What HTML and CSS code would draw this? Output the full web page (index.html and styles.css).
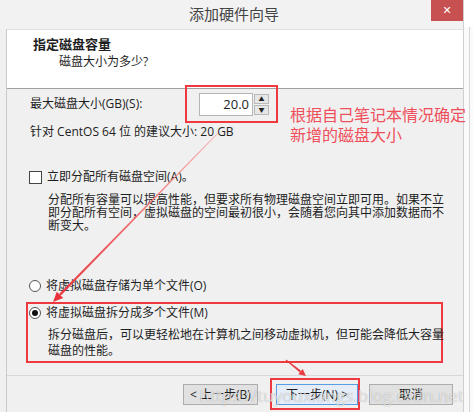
FILE: index.html
```html
<!DOCTYPE html>
<html lang="zh-CN">
<head>
  <meta charset="UTF-8">
  <meta name="viewport" content="width=device-width, initial-scale=1.0">
  <title>添加硬件向导</title>
  <link rel="stylesheet" href="styles.css">
</head>
<body>
  <div class="screen">
    <div class="window">
      <div class="titlebar">
        <span></span>
        <div class="title">添加硬件向导</div>
        <button class="close">✕</button>
      </div>

      <div class="panel">
        <!-- cabeçalho branco -->
        <div class="header">
          <div class="header-title">指定磁盘容量</div>
          <div class="header-sub">磁盘大小为多少?</div>
        </div>

        <div class="body">
          <div class="size-row">
            <div class="size-label">最大磁盘大小(GB)(S):</div>
            <div class="mark spin-mark">
              <div class="spin-input">20.0</div>
              <div class="spin-buttons">
                <div class="spin-btn">&#9650;</div>
                <div class="spin-btn">&#9660;</div>
              </div>
            </div>
          </div>
          <div class="hint">针对 CentOS 64 位 的建议大小: 20 GB</div>

          <div class="option check-row">
            <span class="checkbox"></span>
            <span>立即分配所有磁盘空间(A)。</span>
          </div>
          <p class="desc desc-tight">分配所有容量可以提高性能，但要求所有物理磁盘空间立即可用。如果不立即分配所有空间，虚拟磁盘的空间最初很小，会随着您向其中添加数据而不断变大。</p>

          <div class="option radio-row">
            <span class="radio"></span>
            <span>将虚拟磁盘存储为单个文件(O)</span>
          </div>

          <div class="mark group-mark">
            <div class="option">
              <span class="radio checked"></span>
              <span>将虚拟磁盘拆分成多个文件(M)</span>
            </div>
            <p class="desc">拆分磁盘后，可以更轻松地在计算机之间移动虚拟机，但可能会降低大容量磁盘的性能。</p>
          </div>
        </div>

        <div class="footer">
          <button class="btn btn-back">&lt; 上一步(B)</button>
          <div class="mark next-mark">
            <button class="btn btn-next">下一步(N) &gt;</button>
          </div>
          <button class="btn btn-cancel">取消</button>
        </div>
      </div>
    </div>
    <div class="side"><div class="side-line"></div></div>

    <!-- anotações por cima do print -->
    <div class="note">根据自己笔记本情况确定<br>新增的磁盘大小</div>
    <svg class="arrows" width="473" height="415" viewBox="0 0 473 415">
      <defs>
        <linearGradient id="fade1" gradientUnits="userSpaceOnUse" x1="218" y1="133" x2="53" y2="302">
          <stop offset="0" stop-color="#f7a9a9"/>
          <stop offset="1" stop-color="#e8333a"/>
        </linearGradient>
      </defs>
      <polygon fill="url(#fade1)" points="218.3,133.3 217.7,132.7 59.1,294 60.9,295.6"/>
      <polygon fill="#e8333a" points="53,302 63.2,297.9 56.8,291.7"/>
      <polygon fill="#ea3b40" points="285.7,360.4 286.3,359.6 301.1,370.8 299.9,372.4"/>
      <polygon fill="#ea3b40" points="306,376 298.3,374.3 302.7,368.9"/>
    </svg>
    <div class="watermark">https://tuyouxiangs.blog.csdn.net</div>
  </div>
</body>
</html>
```

FILE: styles.css
```css
* {
  box-sizing: border-box;
}

body {
  margin: 0;
  font-family: "Open Sans", "Noto Sans CJK SC", sans-serif;
  font-size: 12px;
  color: #1e1e1e;
  background-color: #fff;
}

.screen {
  position: relative;
  display: flex;
  width: 473px;
  height: 415px;
  overflow: hidden;
}

/* Janela */
.window {
  width: 464px;
  height: 412px;
  display: flex;
  flex-direction: column;
  background-color: #f0f0f0;
  border-right: 1px solid #cfcfcf;
}

.titlebar {
  height: 29px;
  display: grid;
  grid-template-columns: 1fr auto 1fr;
  background-color: #f2f2f2;
}

.title {
  font-size: 15px;
  line-height: 28px;
  color: #444;
  padding-left: 5px;
}

.close {
  justify-self: end;
  align-self: start;
  width: 32px;
  height: 21px;
  margin: 0;
  padding: 0;
  border: none;
  background-color: #c75050;
  color: #fff;
  font-size: 11px;
  font-weight: bold;
  font-family: "DejaVu Sans", sans-serif;
}

.panel {
  flex: 1;
  display: flex;
  flex-direction: column;
  margin-left: 6px;
  border-left: 1px solid #c9c9c9;
}

.header {
  height: 60px;
  padding: 6px 0 0 26px;
  background-color: #fff;
  border-top: 1px solid #e2e2e2;
  border-bottom: 1px solid #a0a0a0;
  line-height: 16px;
}

.header-title {
  font-weight: bold;
  font-size: 13px;
}

.header-sub {
  margin-top: 2px;
  padding-left: 26px;
}

.body {
  flex: 1;
  padding-left: 22px;
  line-height: 16px;
}

/* Caixas vermelhas de anotação */
.mark {
  border: 2px solid #ee3a3f;
}

.size-row {
  display: flex;
  align-items: center;
  height: 38px;
  margin-top: -4px;
}

.size-label {
  width: 156px;
  padding-left: 1px;
}

.spin-mark {
  display: flex;
  padding: 6px 6px 5px 12px;
}

.spin-input {
  width: 54px;
  height: 23px;
  padding-right: 3px;
  background-color: #fff;
  border: 1px solid #b5b5b5;
  text-align: right;
  font-size: 13px;
  line-height: 21px;
}

.spin-buttons {
  width: 17px;
  height: 23px;
  display: flex;
  flex-direction: column;
  gap: 1px;
  padding: 1px;
}

.spin-btn {
  flex: 1;
  background-color: #e6e6e6;
  border: 1px solid #b9b9b9;
  font-size: 6px;
  line-height: 8px;
  text-align: center;
  color: #222;
}

.hint {
  margin-top: 1px;
  padding-left: 1px;
}

.option {
  display: flex;
  align-items: center;
  height: 16px;
}

.check-row {
  margin-top: 29px;
}

.checkbox {
  width: 13px;
  height: 13px;
  margin-right: 5px;
  background-color: #fff;
  border: 1px solid #444;
}

.radio {
  width: 12px;
  height: 12px;
  margin-right: 5px;
  border-radius: 50%;
  background-color: #fff;
  border: 1px solid #555;
  display: flex;
  align-items: center;
  justify-content: center;
}

.radio.checked::after {
  content: "";
  width: 6px;
  height: 6px;
  border-radius: 50%;
  background-color: #111;
}

.desc {
  width: 398px;
  margin: 6px 0 0 19px;
}

.desc-tight {
  margin-top: 8px;
  line-height: 13px;
}

.radio-row {
  margin-top: 46px;
}

.group-mark {
  width: 417px;
  margin: 8px 0 0 -3px;
  padding: 1px 0 2px 1px;
}

/* Rodapé com botões */
.footer {
  height: 37px;
  display: flex;
  justify-content: flex-end;
  align-items: center;
  padding-right: 10px;
  border-top: 1px solid #d8d8d8;
}

.btn {
  height: 21px;
  margin: 0;
  padding: 0;
  font-family: inherit;
  font-size: 12px;
  color: #1e1e1e;
  background-color: #e1e1e1;
  border: 1px solid #adadad;
}

.btn-back {
  width: 75px;
  margin-right: 12px;
}

.next-mark {
  height: 32px;
  display: flex;
  align-items: center;
  padding-left: 4px;
}

.btn-next {
  width: 82px;
  border-color: #5a9de3;
  background-color: #e5eef8;
}

.btn-cancel {
  width: 84px;
  margin-left: 9px;
}

.side {
  flex: 1;
  height: 412px;
  background-color: #fafafa;
  border-top: 27px solid #fff;
}

.side-line {
  width: 6px;
  height: 100%;
  border-right: 1px solid #d6d6d6;
}

.note {
  position: absolute;
  left: 290px;
  top: 105px;
  font-size: 16px;
  line-height: 20px;
  color: #ef4f5b;
}

.arrows {
  position: absolute;
  left: 0;
  top: 0;
  pointer-events: none;
}

.watermark {
  position: absolute;
  right: 9px;
  top: 384px;
  font-size: 17px;
  color: rgba(255, 255, 255, 0.7);
  text-shadow: 0 0 1px rgba(0, 0, 0, 0.35);
  pointer-events: none;
}
```
